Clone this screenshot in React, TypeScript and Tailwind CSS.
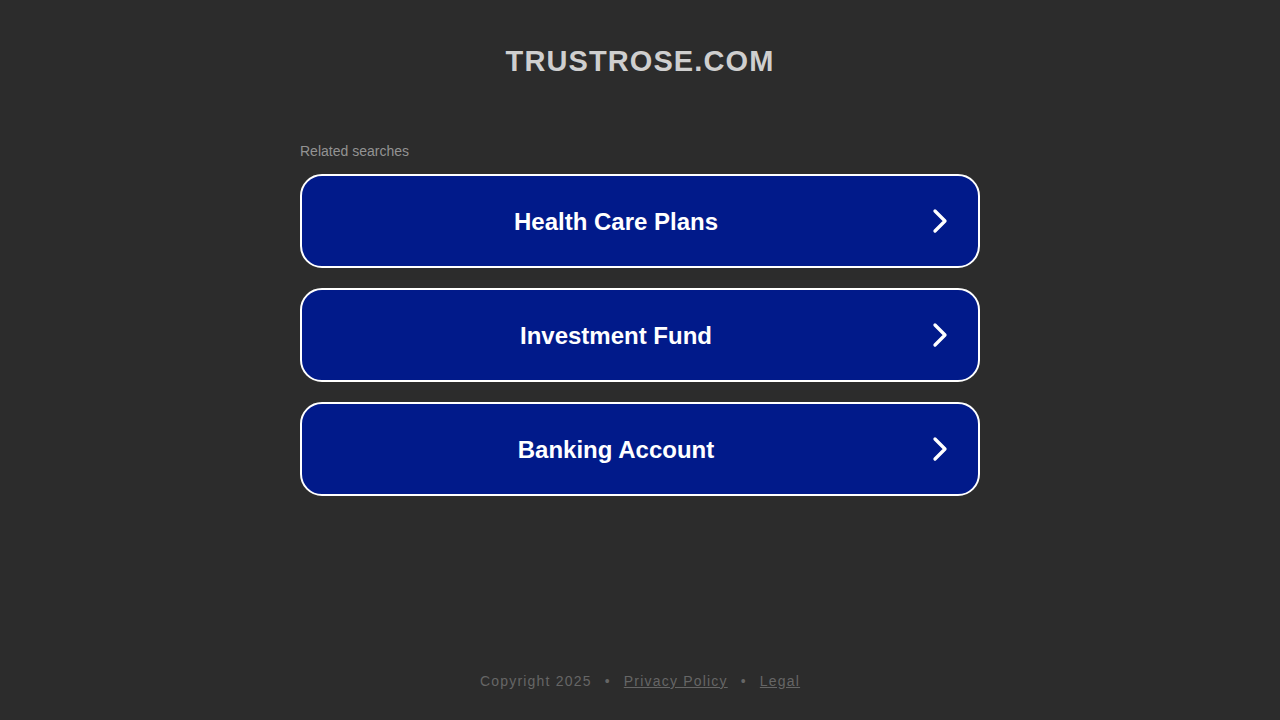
import { ChevronRight } from "lucide-react";

const searches = ["Health Care Plans", "Investment Fund", "Banking Account"];

export default function App() {
  return (
    <div
      className="min-h-screen w-full bg-[#2c2c2c] flex flex-col items-center"
      style={{ fontFamily: "'Liberation Sans', Arial, sans-serif" }}
    >
      {/* Header */}
      <h1 className="mt-[43px] text-[29px] leading-[36px] font-bold tracking-[1.1px] text-[#cfcfcf]">
        TRUSTROSE.COM
      </h1>

      {/* Related searches */}
      <div className="mt-[64px] w-[680px] flex flex-col">
        <p className="text-[14px] leading-[16px] text-[#939393] mb-[15px]">Related searches</p>
        <div className="flex flex-col gap-[20px]">
          {searches.map((s) => (
            <a
              key={s}
              href="#"
              className="h-[94px] flex items-center rounded-[22px] border-2 border-white bg-[#011a8a] text-white"
            >
              <span className="flex-1 pl-[32px] pt-[2px] text-center text-[24px] font-bold">{s}</span>
              <span className="w-[80px] pl-[4px] flex items-center justify-center">
                <ChevronRight size={40} strokeWidth={2} />
              </span>
            </a>
          ))}
        </div>
      </div>

      {/* Footer */}
      <div className="mt-auto mb-[28px] flex items-center gap-[13px] text-[14px] tracking-[1.2px] text-[#666666]">
        <span>Copyright 2025</span>
        <span>•</span>
        <a href="#" className="underline">Privacy Policy</a>
        <span>•</span>
        <a href="#" className="underline">Legal</a>
      </div>
    </div>
  );
}
